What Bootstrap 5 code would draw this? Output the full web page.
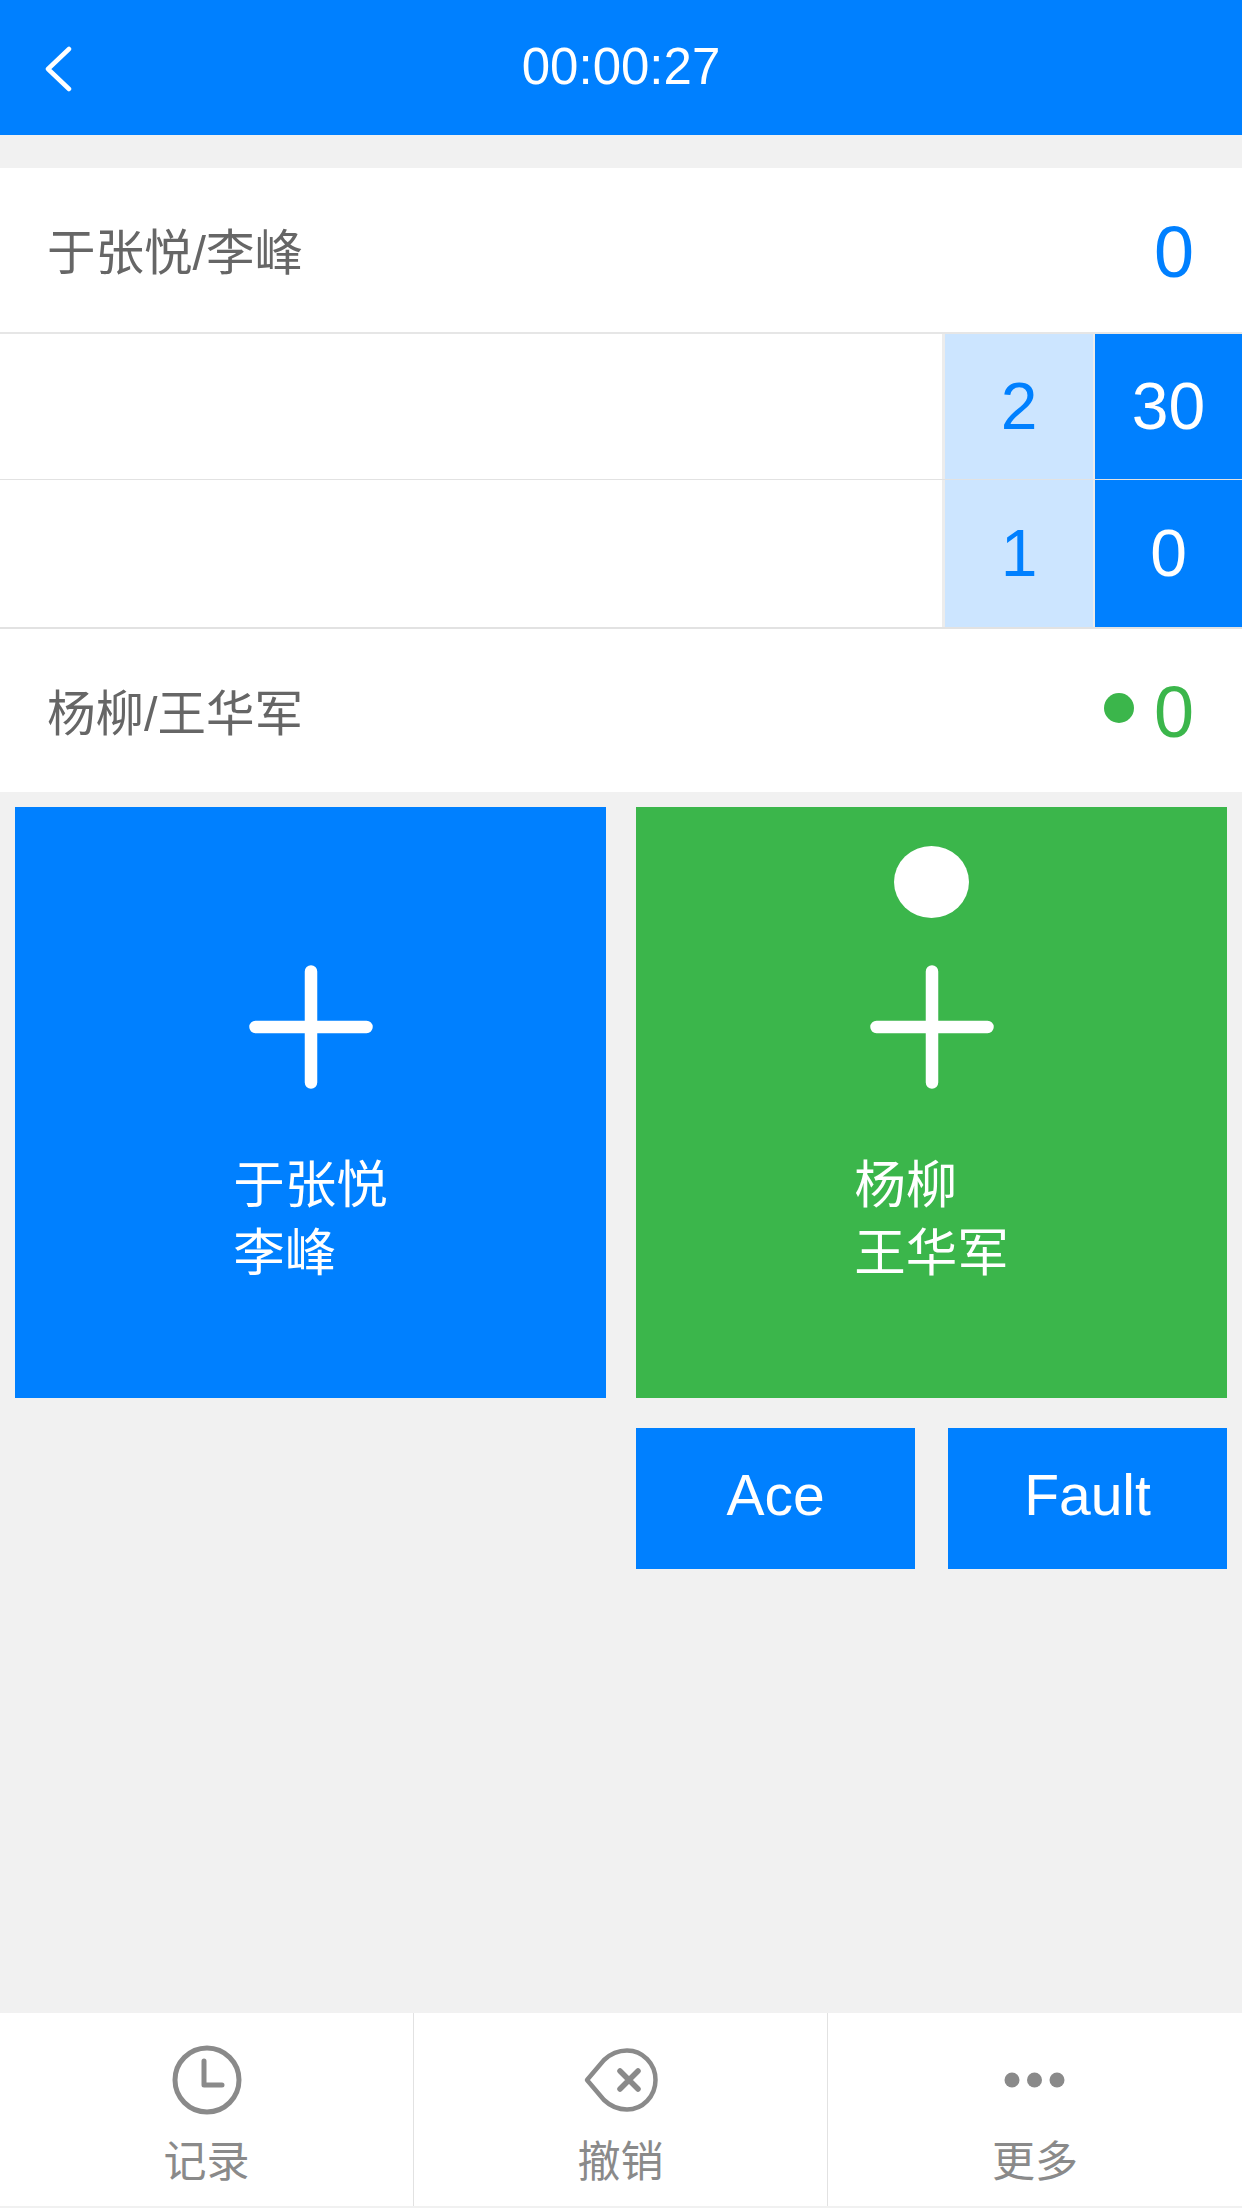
<!DOCTYPE html>
<html lang="zh-CN">
<head>
<meta charset="utf-8">
<title>比分</title>
<link href="https://cdn.jsdelivr.net/npm/bootstrap@5.3.0/dist/css/bootstrap.min.css" rel="stylesheet">
<style>
:root { --sb: #0080ff; --sg: #3bb64b; }
html, body { height: 2208px; }
body { margin: 0; background: #f1f1f1; font-family: "Liberation Sans", "Noto Sans CJK SC", sans-serif; font-weight: 400; overflow: hidden; }
.app-shell { height: 2208px; }
.top-bar { height: 135px; background: var(--sb); color: #fff; font-size: 51px; line-height: 1; padding-bottom: 2px; }
.top-bar svg { left: 44px; top: 46px; }
.score-panel { margin-top: 33px; }
.name-row { background: #fff; padding: 0 48px 0 47px; color: #666; font-size: 48.5px; border-bottom: 2px solid #e6e6e6; }
.name-row.first { height: 166px; }
.name-row.last { height: 163px; border-bottom: 0; }
.name-text { padding-top: 7px; }
.total { font-size: 72px; line-height: 1; color: var(--sb); padding-top: 3px; }
.total.green { color: var(--sg); }
.serve-dot { width: 30px; height: 30px; background: var(--sg); border-radius: 50%; margin-right: 20px; margin-bottom: 5px; }
.set-row { background: #fff; border-bottom: 1px solid #e2e2e2; height: 146px; }
.set-row.tall { height: 149px; border-bottom-width: 2px; }
.cell-games, .cell-points { font-size: 66px; line-height: 1; padding-bottom: 2px; }
.cell-games { width: 153px; background: #cce5ff; color: var(--sb); border-left: 3px solid #ececec; border-right: 2px solid #ececec; }
.cell-points { width: 147px; background: var(--sb); color: #fff; }
.tiles { padding: 15px 15px 0; gap: 30px; }
.tile { width: 591px; height: 591px; color: #fff; padding-top: 157px; font-size: 51.5px; line-height: 68px; }
.tile.blue { background: var(--sb); }
.tile.green { background: var(--sg); }
.tile .ball { width: 75px; height: 72px; background: #fff; border-radius: 50%; top: 39px; left: 258px; }
.tile-label { margin-top: 61px; text-align: left; }
.action-row { padding: 30px 15px 0 636px; gap: 33px; }
.action-btn { width: 279px; height: 141px; background: var(--sb); color: #fff; font-size: 57px; line-height: 1; border: 0; border-radius: 0; padding: 0 0 6px; }
.action-btn:hover, .action-btn:active { background: var(--sb) !important; color: #fff !important; }
.bottom-bar { height: 193px; background: #fff; margin-bottom: 2px; color: #8a8a8a; font-size: 43px; line-height: 1; }
.bottom-item { width: 414px; height: 193px; border-right: 1px solid #e2e2e2; padding-top: 32px; }
.bottom-item:last-child { border-right: 0; }
.bottom-item svg { height: 70px; margin-bottom: 26px; }
</style>
</head>
<body>
<div class="app-shell d-flex flex-column">
  <header class="top-bar position-relative d-flex align-items-center justify-content-center flex-shrink-0">
    <svg class="position-absolute" width="28" height="46" viewBox="0 0 28 46" fill="none" stroke="#fff" stroke-width="4.5" stroke-linecap="round" stroke-linejoin="round"><path d="M25 3 L4 23 L25 43" /></svg>
    <span>00:00:27</span>
  </header>

  <section class="score-panel flex-shrink-0">
    <div class="name-row first d-flex align-items-center justify-content-between">
      <span class="name-text">于张悦/李峰</span>
      <span class="total">0</span>
    </div>
    <div class="set-row d-flex justify-content-end">
      <div class="cell-games d-flex align-items-center justify-content-center">2</div>
      <div class="cell-points d-flex align-items-center justify-content-center">30</div>
    </div>
    <div class="set-row tall d-flex justify-content-end">
      <div class="cell-games d-flex align-items-center justify-content-center">1</div>
      <div class="cell-points d-flex align-items-center justify-content-center">0</div>
    </div>
    <div class="name-row last d-flex align-items-center justify-content-between">
      <span class="name-text">杨柳/王华军</span>
      <span class="d-flex align-items-center"><span class="serve-dot"></span><span class="total green">0</span></span>
    </div>
  </section>

  <main class="flex-grow-1">
    <div class="tiles d-flex">
      <div class="tile blue d-flex flex-column align-items-center">
        <svg width="126" height="126" viewBox="0 0 126 126" fill="none" stroke="#fff" stroke-width="12.5" stroke-linecap="round"><path d="M63 7.5 V118.5 M7.5 63 H118.5"/></svg>
        <div class="tile-label">于张悦<br>李峰</div>
      </div>
      <div class="tile green position-relative d-flex flex-column align-items-center">
        <span class="ball position-absolute"></span>
        <svg width="126" height="126" viewBox="0 0 126 126" fill="none" stroke="#fff" stroke-width="12.5" stroke-linecap="round"><path d="M63 7.5 V118.5 M7.5 63 H118.5"/></svg>
        <div class="tile-label">杨柳<br>王华军</div>
      </div>
    </div>
    <div class="action-row d-flex">
      <button type="button" class="btn action-btn">Ace</button>
      <button type="button" class="btn action-btn">Fault</button>
    </div>
  </main>

  <nav class="bottom-bar d-flex flex-shrink-0">
    <div class="bottom-item d-flex flex-column align-items-center">
      <svg width="70" viewBox="0 0 70 70" fill="none" stroke="#8a8a8a" stroke-width="5"><circle cx="35" cy="35" r="32"/><path d="M32 16 V40 H50" stroke-linecap="round" stroke-linejoin="round"/></svg>
      <span>记录</span>
    </div>
    <div class="bottom-item d-flex flex-column align-items-center">
      <svg width="76" viewBox="0 0 76 70" fill="none" stroke="#8a8a8a" stroke-width="4.5" stroke-linejoin="round"><path d="M4 35 L21 15 Q31 5.500 44 5.500 A28.500 29.500 0 0 1 44 64.500 Q31 64.500 21 55 Z"/><path d="M37 26 L55 44 M55 26 L37 44" stroke-width="5.500" stroke-linecap="round"/></svg>
      <span>撤销</span>
    </div>
    <div class="bottom-item d-flex flex-column align-items-center">
      <svg width="64" viewBox="0 0 64 70" fill="#8a8a8a"><circle cx="9" cy="35" r="7.5"/><circle cx="31.5" cy="35" r="7.5"/><circle cx="54" cy="35" r="7.5"/></svg>
      <span>更多</span>
    </div>
  </nav>
</div>
</body>
</html>
